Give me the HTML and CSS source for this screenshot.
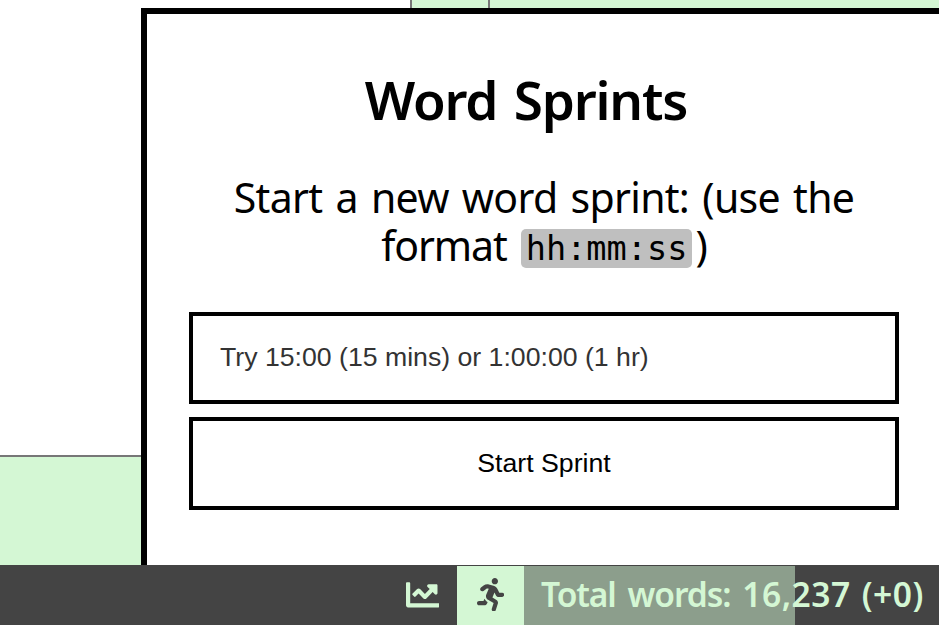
FILE: index.html
```
<!DOCTYPE html>
<html lang="en">
<head>
<meta charset="utf-8">
<title>Word Sprints</title>
<link rel="stylesheet" href="styles.css">
</head>
<body>
<div class="app">
  <main class="workspace">
    <div class="sidebar"><div class="sidebar-panel"></div></div>
    <div class="tabs"><div class="tab"></div><div class="tab"></div></div>
    <section class="modal">
      <h1>Word Sprints</h1>
      <div class="prompt">
        <div class="line">Start a new word sprint: (use the</div>
        <div class="line format"><span>format</span><code>hh:mm:ss</code><span>)</span></div>
      </div>
      <input type="text" placeholder="Try 15:00 (15 mins) or 1:00:00 (1 hr)">
      <button type="button">Start Sprint</button>
    </section>
  </main>
  <footer class="statusbar">
    <div class="tool">
      <svg class="chart" viewBox="0 0 512 512"><path d="M496 384H64V80c0-8.84-7.16-16-16-16H16C7.16 64 0 71.16 0 80v336c0 17.67 14.33 32 32 32h464c8.84 0 16-7.16 16-16v-32c0-8.84-7.16-16-16-16zM464 96H345.94c-21.38 0-32.09 25.85-16.97 40.97l32.4 32.4L288 242.75l-73.37-73.37c-12.5-12.5-32.76-12.5-45.25 0l-68.69 68.69c-6.25 6.25-6.25 16.38 0 22.63l22.62 22.62c6.25 6.25 16.38 6.25 22.63 0L192 237.25l73.37 73.37c12.5 12.5 32.76 12.5 45.25 0l96-96 32.4 32.4c15.12 15.12 40.97 4.41 40.97-16.97V112c.01-8.84-7.15-16-15.99-16z"/></svg>
    </div>
    <div class="tool active">
      <svg class="runner" viewBox="0 0 416 512"><path d="M272 96c26.51 0 48-21.49 48-48S298.51 0 272 0s-48 21.49-48 48 21.49 48 48 48zM113.69 317.47l-14.8 34.52H32c-17.67 0-32 14.33-32 32s14.33 32 32 32h77.45c19.25 0 36.58-11.44 44.11-29.09l8.79-20.52-10.67-6.3c-17.32-10.23-30.06-25.37-37.99-42.61zM384 223.99h-44.03l-26.06-53.25c-12.5-25.55-35.45-44.23-61.78-50.94l-71.08-21.14c-28.3-6.8-57.77-.55-80.84 17.14l-39.67 30.41c-14.03 10.75-16.69 30.83-5.94 44.86s30.84 16.69 44.86 5.94l39.69-30.41c7.67-5.89 17.44-8 25.27-6.14l14.7 4.37-37.46 87.39c-12.62 29.48-1.31 64.01 26.3 80.31l84.98 50.17-27.47 87.73c-5.28 16.86 4.11 34.82 20.97 40.09 3.19 1 6.41 1.48 9.58 1.48 13.61 0 26.23-8.77 30.52-22.45l31.64-101.06c5.91-20.77-2.89-43.08-21.64-54.39l-61.24-36.14 31.31-78.28 20.27 41.43c8 16.34 24.92 26.89 43.11 26.89H384c17.67 0 32-14.33 32-32s-14.33-31.99-32-31.99z"/></svg>
    </div>
    <div class="total"><span class="label">Total words: </span><span class="count">16,237 (+0)</span></div>
  </footer>
</div>
</body>
</html>
```
FILE: styles.css
```
* { box-sizing: border-box; }
body {
  margin: 0;
  overflow: hidden;
  background: #fff;
  color: #000;
  font-family: "Trebuchet MS", "Noto Sans", sans-serif;
}
.app { display: flex; flex-direction: column; height: 625px; }
.workspace { position: relative; display: flex; height: 565px; overflow: hidden; }
.sidebar { display: flex; flex-direction: column; justify-content: flex-end; width: 410px; }
.sidebar-panel { height: 110px; background: #d4f7d4; border-top: 2px solid #777; }
.tabs { display: flex; flex: 1; height: 40px; }
.tab { width: 80px; background: #d4f7d4; border-left: 2px solid #777; border-right: 2px solid #777; }
.tab + .tab { flex: 1; border: 0; }
.modal {
  position: absolute;
  left: 141px;
  top: 8px;
  width: 840px;
  height: 700px;
  padding: 46px 76px 0 42px;
  border: 6px solid #000;
  background: #fff;
}
h1 {
  width: 674px;
  margin: 0;
  text-align: center;
  font-size: 53px;
  font-weight: 600;
  line-height: 80px;
  letter-spacing: -1.2px;
  word-spacing: 4px;
}
.prompt {
  width: 710px;
  height: 96px;
  margin-top: 33px;
  font-size: 41px;
  line-height: 48px;
  white-space: nowrap;
}
.line { text-align: center; letter-spacing: -0.7px; word-spacing: 3.2px; }
.format { display: flex; justify-content: center; letter-spacing: -1.1px; word-spacing: 0; }
code {
  height: 39px;
  margin: 8px 3px 0 14px;
  padding: 0 5px;
  border-radius: 5px;
  background: #bfbfbf;
  font: 33.6px/39px "DejaVu Sans Mono", monospace;
  letter-spacing: 0;
}
input, button {
  display: block;
  width: 710px;
  border: 4px solid #000;
  border-radius: 0;
  background: #fff;
  color: #000;
  font: 26.67px "Liberation Sans", Arial, sans-serif;
}
input { height: 92px; margin-top: 43px; padding: 0 27px 2px; }
input::placeholder { color: #333; opacity: 1; }
button { height: 93px; margin-top: 13px; padding: 0; }
.statusbar {
  display: flex;
  justify-content: flex-end;
  height: 60px;
  background: #444;
  border-top: 1px solid #444;
  color: #d4f7d4;
}
.tool { display: flex; align-items: center; justify-content: center; width: 67px; }
.tool svg { fill: currentColor; height: 33.6px; margin-bottom: 2px; }
.chart { width: 33.6px; margin-right: 2px; }
.runner { width: 27.3px; }
.active { background: #d4f7d4; color: #444; }
.total {
  width: 415px;
  padding-left: 17px;
  background: linear-gradient(to right, #8c9e8c 271px, #444 271px);
  font-size: 33.6px;
  font-weight: 600;
  line-height: 56px;
  white-space: nowrap;
}
.label { letter-spacing: -1.1px; word-spacing: 4.2px; }
.count { letter-spacing: 0.55px; word-spacing: 1.5px; }
```
